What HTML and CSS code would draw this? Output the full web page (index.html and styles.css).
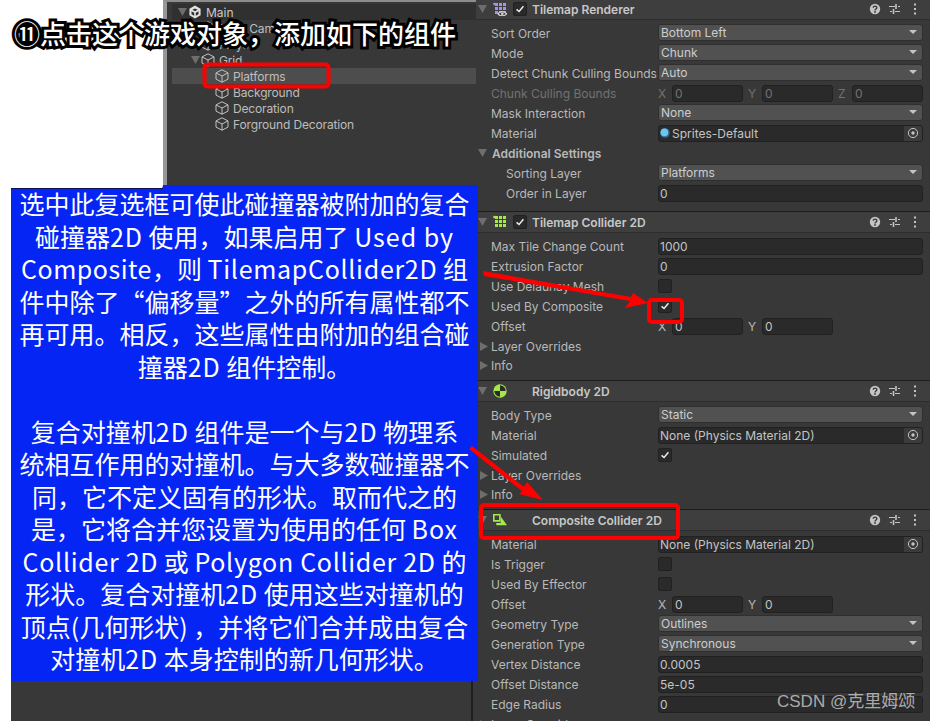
FILE: index.html
```html
<!DOCTYPE html>
<html lang="zh">

<head>
    <meta charset="UTF-8">
    <title>Tilemap Collider</title>
    <link rel="stylesheet" href="styles.css">
</head>

<body>
    <svg class="defs" width="0" height="0">
        <symbol id="cube" viewBox="0 0 14 14">
            <path d="M7 .8 13 3.9V10.1L7 13.2 1 10.1V3.9ZM1 3.9 7 7 13 3.9M7 7V13.2" fill="none" stroke="#c2c2c2" stroke-width="1" />
        </symbol>
        <symbol id="down" viewBox="0 0 9 8">
            <path d="M0 0H9L4.5 8Z" fill="#6e6e6e" />
        </symbol>
        <symbol id="right" viewBox="0 0 8 9">
            <path d="M0 0V9L8 4.5Z" fill="#6e6e6e" />
        </symbol>
        <symbol id="tick" viewBox="0 0 14 14">
            <path d="M3 7.4 5.9 10 11 3.8" fill="none" stroke="#eee" stroke-width="1.7" />
        </symbol>
        <symbol id="help" viewBox="0 0 12 12">
            <circle cx="6" cy="6" r="5.2" fill="#c4c4c4" />
            <path d="M4.2 4.7C4.3 2.6 7.9 2.7 7.8 4.7 7.8 6 6 6 6 7.4" fill="none" stroke="#383838" stroke-width="1.4" />
            <rect x="5.2" y="8.2" width="1.6" height="1.6" fill="#383838" />
        </symbol>
        <symbol id="sliders" viewBox="0 0 12 12">
            <path d="M0 3.5H6M9 3.5H11M1 8.5H3M6 8.5H11" stroke="#c4c4c4" stroke-width="1.2" />
            <path d="M7 1V6M4.5 6V11" stroke="#c4c4c4" stroke-width="1.6" />
        </symbol>
        <symbol id="dots" viewBox="0 0 12 12">
            <path d="M5 0.5H7V2.5H5ZM5 5H7V7H5ZM5 9.5H7V11.5H5Z" fill="#c4c4c4" />
        </symbol>
        <symbol id="target" viewBox="0 0 12 12">
            <circle cx="6" cy="6" r="4.6" fill="none" stroke="#c4c4c4" stroke-width="1" />
            <circle cx="6" cy="6" r="1.7" fill="#c4c4c4" />
        </symbol>
        <symbol id="grid" viewBox="0 0 14 14">
            <circle cx="1.4" cy="2" r="1.3" />
            <path d="M2 1H5V4H2ZM6 1H9V4H6ZM10 1H13V4H10ZM2 5H5V8H2ZM6 5H9V8H6ZM10 5H13V8H10ZM2 9H5V12H2ZM6 9H9V12H6ZM10 9H13V12H10Z" />
        </symbol>
    </svg>

    <div class="stage">
        <div class="left-col">
            <div class="top-area">
                <div class="blank"></div>
                <div class="hier">
                    <div class="hier-row hier-scene depth-0">
                        <svg class="fold"><use href="#down" /></svg>
                        <svg class="obj" viewBox="0 0 14 14">
                            <path d="M7 .5 12.6 3.8V10.2L7 13.5 1.4 10.2V3.8ZM7 3.4 4.4 4.8 7 6.3 9.6 4.8ZM3.5 6.2V9.2L6.2 10.8V7.8ZM10.5 6.2 7.8 7.8V10.8L10.5 9.2Z" fill="#e2e2e2" fill-rule="evenodd" />
                        </svg>
                        <span>Main</span>
                    </div>
                    <div class="hier-row depth-1"><span class="fold"></span><svg class="obj"><use href="#cube" /></svg><span>Main Camera</span></div>
                    <div class="hier-row depth-1"><span class="fold"></span><svg class="obj"><use href="#cube" /></svg><span>Player</span></div>
                    <div class="hier-row depth-1"><svg class="fold"><use href="#down" /></svg><svg class="obj"><use href="#cube" /></svg><span>Grid</span></div>
                    <div class="hier-row depth-2 hier-selected"><span class="fold"></span><svg class="obj"><use href="#cube" /></svg><span>Platforms</span></div>
                    <div class="hier-row depth-2"><span class="fold"></span><svg class="obj"><use href="#cube" /></svg><span>Background</span></div>
                    <div class="hier-row depth-2"><span class="fold"></span><svg class="obj"><use href="#cube" /></svg><span>Decoration</span></div>
                    <div class="hier-row depth-2"><span class="fold"></span><svg class="obj"><use href="#cube" /></svg><span>Forground Decoration</span></div>
                </div>
            </div>
            <div class="lower">
                <div class="lower-pane"></div>
            </div>
        </div>

        <div class="inspector">
            <section class="comp comp-first">
                <div class="comp-head">
                    <svg class="fold-head"><use href="#down" /></svg>
                    <svg class="comp-icon icon-purple" viewBox="0 0 14 14">
                        <use href="#grid" />
                        <path d="M5 11.800C7 9 11 9 13.700 11.800 11 14.600 7 14.600 5 11.800Z" fill="#3e3e3e" stroke="#d8d8d8" stroke-width="1.200" />
                        <circle cx="9.300" cy="11.800" r="1.300" fill="#d8d8d8" />
                    </svg>
                    <span class="check check-head"><svg><use href="#tick" /></svg></span>
                    <span class="comp-title">Tilemap Renderer</span>
                    <span class="comp-tools">
                        <svg><use href="#help" /></svg><svg><use href="#sliders" /></svg><svg><use href="#dots" /></svg>
                    </span>
                </div>
                <div class="row"><label>Sort Order</label><div class="drop">Bottom Left</div></div>
                <div class="row"><label>Mode</label><div class="drop">Chunk</div></div>
                <div class="row"><label>Detect Chunk Culling Bounds</label><div class="drop">Auto</div></div>
                <div class="row row-off">
                    <label>Chunk Culling Bounds</label>
                    <div class="vec">
                        <div class="vec-item"><i>X</i><div class="input">0</div></div>
                        <div class="vec-item"><i>Y</i><div class="input">0</div></div>
                        <div class="vec-item"><i>Z</i><div class="input">0</div></div>
                    </div>
                </div>
                <div class="row"><label>Mask Interaction</label><div class="drop">None</div></div>
                <div class="row">
                    <label>Material</label>
                    <div class="input object">
                        <svg class="ball" viewBox="0 0 10 10"><circle cx="5" cy="5" r="4.800" fill="#2f6f96" /><circle cx="4.400" cy="4.400" r="3.800" fill="#6cc6ee" /></svg>
                        <span>Sprites-Default</span>
                        <b class="object-btn"><svg><use href="#target" /></svg></b>
                    </div>
                </div>
                <div class="row row-group"><svg class="fold-row"><use href="#down" /></svg><label>Additional Settings</label></div>
                <div class="row row-sub"><label>Sorting Layer</label><div class="drop">Platforms</div></div>
                <div class="row row-sub"><label>Order in Layer</label><div class="input">0</div></div>
            </section>

            <section class="comp">
                <div class="comp-head">
                    <svg class="fold-head"><use href="#down" /></svg>
                    <svg class="comp-icon icon-green" viewBox="0 0 14 14"><use href="#grid" /></svg>
                    <span class="check check-head"><svg><use href="#tick" /></svg></span>
                    <span class="comp-title">Tilemap Collider 2D</span>
                    <span class="comp-tools">
                        <svg><use href="#help" /></svg><svg><use href="#sliders" /></svg><svg><use href="#dots" /></svg>
                    </span>
                </div>
                <div class="row"><label>Max Tile Change Count</label><div class="input">1000</div></div>
                <div class="row"><label>Extrusion Factor</label><div class="input">0</div></div>
                <div class="row"><label>Use Delaunay Mesh</label><span class="check"></span></div>
                <div class="row"><label>Used By Composite</label><span class="check"><svg><use href="#tick" /></svg></span></div>
                <div class="row">
                    <label>Offset</label>
                    <div class="vec">
                        <div class="vec-item"><i>X</i><div class="input">0</div></div>
                        <div class="vec-item"><i>Y</i><div class="input">0</div></div>
                    </div>
                </div>
                <div class="foldout"><svg class="fold-row"><use href="#right" /></svg>Layer Overrides</div>
                <div class="foldout foldout-end"><svg class="fold-row"><use href="#right" /></svg>Info</div>
            </section>

            <section class="comp">
                <div class="comp-head">
                    <svg class="fold-head"><use href="#down" /></svg>
                    <svg class="comp-icon" viewBox="0 0 14 14">
                        <circle cx="7" cy="7" r="6.700" fill="#a4e84a" />
                        <path d="M7 1.300A5.700 5.700 0 0 1 12.700 7H7ZM7 7V12.700A5.700 5.700 0 0 1 1.300 7Z" fill="#2b2b2b" />
                    </svg>
                    <span class="check-gap"></span>
                    <span class="comp-title">Rigidbody 2D</span>
                    <span class="comp-tools">
                        <svg><use href="#help" /></svg><svg><use href="#sliders" /></svg><svg><use href="#dots" /></svg>
                    </span>
                </div>
                <div class="row"><label>Body Type</label><div class="drop">Static</div></div>
                <div class="row">
                    <label>Material</label>
                    <div class="input object"><span>None (Physics Material 2D)</span><b class="object-btn"><svg><use href="#target" /></svg></b></div>
                </div>
                <div class="row"><label>Simulated</label><span class="check"><svg><use href="#tick" /></svg></span></div>
                <div class="foldout"><svg class="fold-row"><use href="#right" /></svg>Layer Overrides</div>
                <div class="foldout foldout-end"><svg class="fold-row"><use href="#right" /></svg>Info</div>
            </section>

            <section class="comp">
                <div class="comp-head">
                    <svg class="fold-head"><use href="#down" /></svg>
                    <svg class="comp-icon" viewBox="0 0 14 14">
                        <path d="M.8 1.800H6.900V7.900H.8Z" fill="none" stroke="#a4e84a" stroke-width="1.600" />
                        <path d="M7.700 3.500 14 12.300H3.300V10H7.700Z" fill="#a4e84a" />
                    </svg>
                    <span class="check-gap"></span>
                    <span class="comp-title">Composite Collider 2D</span>
                    <span class="comp-tools">
                        <svg><use href="#help" /></svg><svg><use href="#sliders" /></svg><svg><use href="#dots" /></svg>
                    </span>
                </div>
                <div class="row">
                    <label>Material</label>
                    <div class="input object"><span>None (Physics Material 2D)</span><b class="object-btn"><svg><use href="#target" /></svg></b></div>
                </div>
                <div class="row"><label>Is Trigger</label><span class="check"></span></div>
                <div class="row"><label>Used By Effector</label><span class="check"></span></div>
                <div class="row">
                    <label>Offset</label>
                    <div class="vec">
                        <div class="vec-item"><i>X</i><div class="input">0</div></div>
                        <div class="vec-item"><i>Y</i><div class="input">0</div></div>
                    </div>
                </div>
                <div class="row"><label>Geometry Type</label><div class="drop">Outlines</div></div>
                <div class="row"><label>Generation Type</label><div class="drop">Synchronous</div></div>
                <div class="row"><label>Vertex Distance</label><div class="input">0.0005</div></div>
                <div class="row"><label>Offset Distance</label><div class="input">5e-05</div></div>
                <div class="row"><label>Edge Radius</label><div class="input">0</div></div>
                <div class="foldout"><svg class="fold-row"><use href="#right" /></svg>Layer Overrides</div>
            </section>
        </div>

        <!-- annotations on top of the screenshot -->
        <div class="step-title">⑪点击这个游戏对象&#65292;添加如下的组件</div>

        <div class="note">
            <p>选中此复选框可使此碰撞器被附加的复合</p>
            <p>碰撞器<em>2D</em> 使用&#65292;如果启用了 <em>Used by</em></p>
            <p><em class="wide">Composite</em>&#65292;则 <em class="tight">TilemapCollider2D</em> 组</p>
            <p>件中除了“偏移量”之外的所有属性都不</p>
            <p>再可用。相反&#65292;这些属性由附加的组合碰</p>
            <p>撞器<em>2D</em> 组件控制。</p>
            <p>&nbsp;</p>
            <p>复合对撞机<em>2D</em> 组件是一个与<em>2D</em> 物理系</p>
            <p>统相互作用的对撞机。与大多数碰撞器不</p>
            <p>同&#65292;它不定义固有的形状。取而代之的</p>
            <p>是&#65292;它将合并您设置为使用的任何 <em>Box</em></p>
            <p><em class="tight">Collider 2D</em> 或 <em class="tight">Polygon Collider 2D</em> 的</p>
            <p>形状。复合对撞机<em>2D</em> 使用这些对撞机的</p>
            <p>顶点(几何形状) &#65292;并将它们合并成由复合</p>
            <p>对撞机<em>2D</em> 本身控制的新几何形状。</p>
        </div>

        <svg class="marks" viewBox="0 0 930 721">
            <rect x="204.500" y="64.500" width="124" height="22" rx="3" />
            <rect x="649" y="300" width="33" height="22" rx="3" />
            <rect x="481" y="505" width="197" height="33" rx="3" />
            <path d="M483 271 484 276 630 301 625 308 648 303 633 293 631 297Z" />
            <path d="M472 446 469 449 522 491 519 494 543 500 527 482 524 487Z" />
        </svg>

        <div class="watermark">CSDN @克里姆颂</div>
    </div>
</body>

</html>
```

FILE: styles.css
```css
body {
    margin: 0;
    background-color: #fff;
}

.defs {
    position: absolute;
}

.stage {
    position: relative;
    display: flex;
    width: 930px;
    height: 721px;
    overflow: hidden;
    font-family: Inter, "Liberation Sans", sans-serif;
    font-size: 12px;
    color: #b9b9b9;
}

/* left side */
.left-col {
    display: flex;
    flex-direction: column;
    width: 476px;
}

.top-area {
    display: flex;
    height: 185px;
}

.blank {
    position: relative;
    z-index: 2;
    flex: none;
    width: 163px;
    height: 189px;
    background-color: #fff;
    border-bottom-right-radius: 4px;
}

.blank::after {
    content: "";
    position: absolute;
    left: 11px;
    right: 0;
    bottom: 0;
    height: 1px;
    background-color: #10105a;
}

.hier {
    flex: 1;
    padding-left: 5px;
    background-color: #383838;
    border-left: 4px solid #979797;
    border-top: 2px solid #8d8d8d;
}

.hier-row {
    display: flex;
    align-items: center;
    height: 16px;
    color: #bdbdbd;
    letter-spacing: -0.15px;
    white-space: nowrap;
}

.hier-scene {
    margin-top: 2px;
    background-color: #303030;
    color: #c8c8c8;
    letter-spacing: 0;
}

.hier-selected {
    background-color: #4d4d4d;
}

.depth-0 {
    padding-left: 2px;
}

.depth-1 {
    padding-left: 15px;
}

.depth-2 {
    padding-left: 29px;
}

.fold {
    flex: none;
    width: 14px;
    height: 8px;
    padding-left: 3px;
    box-sizing: border-box;
}

.obj {
    flex: none;
    width: 14px;
    height: 14px;
    margin-right: 4px;
}

.lower {
    flex: 1;
    margin-left: 11px;
    background-color: #383838;
}

.lower-pane {
    width: 460px;
    height: 100%;
    border-right: 2px solid #1f1f1f;
}

/* inspector */
.inspector {
    flex: none;
    width: 454px;
    height: 740px;
    background-color: #383838;
}

.comp {
    padding-bottom: 6px;
}

.comp-first {
    margin-top: -2px;
    padding-bottom: 8px;
}

.comp-head {
    display: flex;
    align-items: center;
    height: 20px;
    margin-bottom: 3px;
    background-color: #3e3e3e;
    border-top: 1px solid #1c1c1c;
    border-bottom: 1px solid #2d2d2d;
}

.fold-head {
    flex: none;
    width: 9px;
    height: 8px;
    margin: 0 6px 0 2px;
}

.comp-icon {
    flex: none;
    width: 14px;
    height: 14px;
}

.icon-purple {
    fill: #a98cf0;
}

.icon-green {
    fill: #a4e84a;
}

.check-gap {
    flex: none;
    width: 25px;
}

.check-head {
    margin: 0 5px 0 6px;
}

.comp-title {
    font-weight: 600;
    color: #c8c8c8;
}

.comp-tools {
    display: flex;
    gap: 8px;
    margin-left: auto;
    margin-right: 9px;
}

.comp-tools svg {
    width: 12px;
    height: 12px;
}

.row {
    display: flex;
    align-items: center;
    height: 20px;
    padding: 0 7px 0 15px;
}

.row label {
    flex: none;
    width: 167px;
    white-space: nowrap;
}

.row-sub {
    padding-left: 30px;
}

.row-sub label {
    width: 152px;
}

.row-group {
    padding-left: 2px;
    font-weight: 600;
}

.row-group label {
    margin-left: 5px;
}

.row-off label,
.row-off i,
.row-off .input {
    color: #727272;
}

.drop,
.input {
    flex: 1;
    box-sizing: border-box;
    height: 17px;
    line-height: 15px;
    border-radius: 3px;
}

.drop {
    position: relative;
    padding-left: 2px;
    margin-top: -1px;
    background-color: #515151;
    border: 1px solid #2f2f2f;
    color: #cdcdcd;
}

.drop::after {
    content: "";
    position: absolute;
    right: 5px;
    top: 5px;
    border-style: solid;
    border-width: 4px 4px 0;
    border-color: #c4c4c4 transparent transparent;
}

.input {
    padding-left: 1px;
    background-color: #2a2a2a;
    border: 1px solid #212121;
    color: #c4c4c4;
    white-space: nowrap;
}

.vec-item .input {
    padding-left: 2px;
}

.object {
    display: flex;
    align-items: center;
    overflow: hidden;
}

.ball {
    flex: none;
    width: 10px;
    height: 10px;
    margin-right: 2px;
}

.object-btn {
    display: flex;
    align-items: center;
    justify-content: center;
    width: 18px;
    height: 100%;
    margin-left: auto;
    background-color: #3b3b3b;
}

.object-btn svg {
    width: 12px;
    height: 12px;
}

.check {
    display: block;
    flex: none;
    box-sizing: border-box;
    width: 14px;
    height: 14px;
    background-color: #2a2a2a;
    border: 1px solid #212121;
    border-radius: 2px;
}

.check svg {
    display: block;
    width: 12px;
    height: 12px;
}

.vec {
    flex: 1;
    display: grid;
    grid-template-columns: repeat(3, 85px);
    column-gap: 5px;
}

.vec-item {
    display: flex;
    align-items: center;
}

.vec-item i {
    flex: none;
    width: 14px;
    font-style: normal;
}

.foldout {
    display: flex;
    align-items: center;
    height: 20px;
    padding-left: 4px;
}

.foldout-end {
    height: 18px;
}

.fold-row {
    flex: none;
    width: 8px;
    height: 9px;
    margin-right: 3px;
}

.row-group .fold-row {
    width: 9px;
    height: 8px;
    margin-right: 0;
}

/* annotations */
.step-title {
    position: absolute;
    z-index: 3;
    left: 14px;
    top: 16px;
    font-family: "Noto Sans CJK SC", sans-serif;
    font-size: 26px;
    line-height: 34px;
    font-weight: 500;
    color: #fff;
    white-space: nowrap;
    -webkit-text-stroke: 6px #000;
    paint-order: stroke fill;
}

.note {
    position: absolute;
    z-index: 1;
    left: 11px;
    top: 185px;
    box-sizing: border-box;
    width: 467px;
    height: 496px;
    padding-top: 2px;
    background-color: #0525f5;
    border-radius: 0 2px 2px 0;
    font-family: "Noto Sans CJK SC", sans-serif;
    font-size: 25px;
    line-height: 32.5px;
    color: #fff;
    text-align: center;
}

.note p {
    margin: 0;
    white-space: nowrap;
}

.note em {
    font-style: normal;
    letter-spacing: 1px;
}

.note .wide {
    letter-spacing: 0.5px;
}

.note .tight {
    letter-spacing: 0.7px;
}

.marks {
    position: absolute;
    z-index: 2;
    left: 0;
    top: 0;
    width: 930px;
    height: 721px;
}

.marks rect {
    fill: none;
    stroke: #f00;
    stroke-width: 4px;
}

.marks path {
    fill: #f00;
}

.watermark {
    position: absolute;
    z-index: 3;
    left: 777px;
    top: 690px;
    font-family: "Liberation Sans", "Noto Sans CJK SC", sans-serif;
    font-size: 17px;
    line-height: 24px;
    color: rgba(255, 255, 255, 0.62);
    white-space: nowrap;
}
```
